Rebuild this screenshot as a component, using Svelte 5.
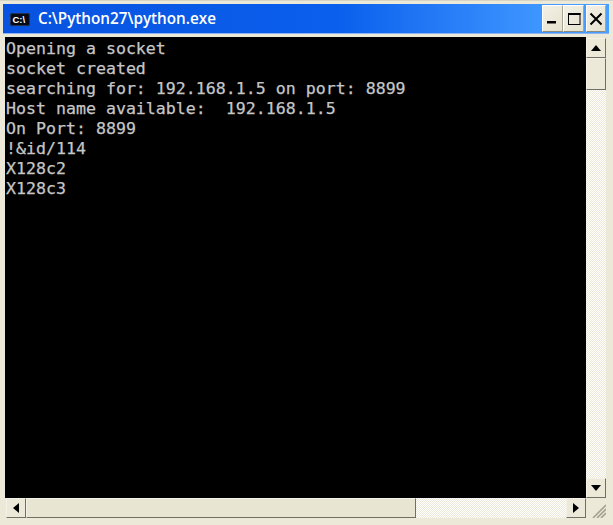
<script>
  const lines = [
    'Opening a socket',
    'socket created',
    'searching for: 192.168.1.5 on port: 8899',
    'Host name available:  192.168.1.5',
    'On Port: 8899',
    '!&id/114',
    'X128c2',
    'X128c3'
  ];
</script>

<div class="window">
  <div class="titlebar">
    <svg class="app-icon" width="20" height="13" viewBox="0 0 20 13">
      <rect x="0" y="0" width="20" height="13" rx="2.500" fill="#050a18" />
      <rect x="0.500" y="0.500" width="19" height="12" rx="2" fill="none" stroke="#3a4a70" stroke-width="0.600" />
      <text x="2.500" y="10" class="icon-text">C:\</text>
    </svg>
    <span class="title">C:\Python27\python.exe</span>
    <div class="controls">
      <button class="ctl">
        <svg width="13" height="13" viewBox="0 0 13 13"><rect x="1" y="9" width="9" height="2.500" fill="#000" /></svg>
      </button>
      <button class="ctl">
        <svg width="14" height="14" viewBox="0 0 14 14"><rect x="1" y="1" width="12.500" height="2" fill="#000" /><rect x="1.500" y="1.500" width="11.500" height="11" fill="none" stroke="#000" /></svg>
      </button>
      <button class="ctl close">
        <svg width="14" height="14" viewBox="0 0 14 14"><path d="M1.500 1.500l11 11M12.500 1.500l-11 11" stroke="#000" stroke-width="2" /></svg>
      </button>
    </div>
  </div>

  <div class="body">
    <div class="main">
      <div class="console">
        {#each lines as line}
          <div class="line">{line}</div>
        {/each}
      </div>
      <div class="vscroll">
        <div class="btn">
          <svg width="10" height="6" viewBox="0 0 10 6"><path d="M5 0l5 6H0z" fill="#000" /></svg>
        </div>
        <div class="thumb-v"></div>
        <div class="track"></div>
        <div class="btn">
          <svg width="10" height="6" viewBox="0 0 10 6"><path d="M0 0h10L5 6z" fill="#000" /></svg>
        </div>
      </div>
    </div>
    <div class="bottom">
      <div class="hscroll">
        <div class="btn">
          <svg width="6" height="10" viewBox="0 0 6 10"><path d="M6 0v10L0 5z" fill="#000" /></svg>
        </div>
        <div class="thumb-h"></div>
        <div class="track"></div>
        <div class="btn">
          <svg width="6" height="10" viewBox="0 0 6 10"><path d="M0 0l6 5-6 5z" fill="#000" /></svg>
        </div>
      </div>
      <div class="grip">
        <svg width="20" height="20" viewBox="0 0 20 20">
          <path d="M7 20L20 7M11 20l9-9M15 20l5-5" stroke="#a5a18f" stroke-width="1.600" fill="none" />
        </svg>
      </div>
    </div>
  </div>
</div>

<style>
  :global(body) {
    margin: 0;
    background: #ece9d8;
  }

  .window {
    width: 613px;
    height: 525px;
    box-sizing: border-box;
    padding: 3px 3px 7px 3px;
    background: #ece9d8;
    border-top: 1px solid #d8d4c4;
    display: flex;
    flex-direction: column;
    overflow: hidden;
  }

  .titlebar {
    height: 30px;
    flex: none;
    display: flex;
    align-items: center;
    background: linear-gradient(to right, #0853e0 0%, #0a5fec 55%, #3d95ff 88%, #4aa0ff 100%);
    border-bottom: 1px solid #8fb4f0;
    box-sizing: border-box;
    padding-left: 7px;
    margin-right: 1px;
  }

  .app-icon {
    flex: none;
    margin-top: 1px;
  }

  .icon-text {
    fill: #fff;
    font: bold 9.500px "Liberation Sans", Arial, sans-serif;
  }

  .title {
    margin-left: 8px;
    color: #fff;
    font: 600 15.250px "Open Sans", sans-serif;
    margin-top: -1px;
  }

  .controls {
    margin-left: auto;
    display: flex;
    margin-right: 3px;
    align-self: flex-start;
    margin-top: 1px;
  }

  .ctl {
    width: 21px;
    height: 27px;
    padding: 0;
    border: 1px solid;
    border-color: #fff #a8a596 #8e8b7c #fff;
    background: linear-gradient(135deg, #f3f1e6, #e6e2cf);
    display: flex;
    align-items: center;
    justify-content: center;
  }

  .ctl.close {
    margin-left: 2px;
    width: 20px;
  }

  .body {
    flex: 1;
    min-height: 0;
    display: flex;
    flex-direction: column;
    padding: 3px 4px 0 2px;
  }

  .main {
    flex: 1;
    min-height: 0;
    display: flex;
  }

  .console {
    flex: 1;
    background: #000;
    color: #c6c6c6;
    -webkit-text-stroke: 0.250px #c6c6c6;
    font: 16.600px/20px "DejaVu Sans Mono", monospace;
    padding: 2px 0 0 1px;
    white-space: pre;
    overflow: hidden;
  }

  .vscroll {
    flex: none;
    width: 20px;
    display: flex;
    flex-direction: column;
    padding-top: 1px;
  }

  .btn {
    flex: none;
    width: 20px;
    height: 20px;
    box-sizing: border-box;
    background: #ece9d8;
    border: 1px solid;
    border-color: #f4f2e8 #716f64 #716f64 #f4f2e8;
    display: flex;
    align-items: center;
    justify-content: center;
  }

  .track {
    flex: 1;
    background-color: #f6f5ee;
    background-image: repeating-conic-gradient(#ece9d8 0 25%, #fff 0 50%);
    background-size: 2px 2px;
  }

  .thumb-v {
    flex: none;
    height: 32px;
    box-sizing: border-box;
    background: #ece9d8;
    border: 1px solid;
    border-color: #f4f2e8 #716f64 #716f64 #f4f2e8;
  }

  .bottom {
    flex: none;
    height: 20px;
    display: flex;
  }

  .hscroll {
    flex: 1;
    display: flex;
    padding-left: 1px;
  }

  .thumb-h {
    flex: none;
    width: 390px;
    box-sizing: border-box;
    background: #e8e5d3;
    border: 1px solid;
    border-color: #f4f2e8 #716f64 #716f64 #f4f2e8;
  }

  .grip {
    flex: none;
    width: 20px;
    height: 20px;
    background: #ece9d8;
  }

  .grip svg {
    display: block;
  }
</style>
